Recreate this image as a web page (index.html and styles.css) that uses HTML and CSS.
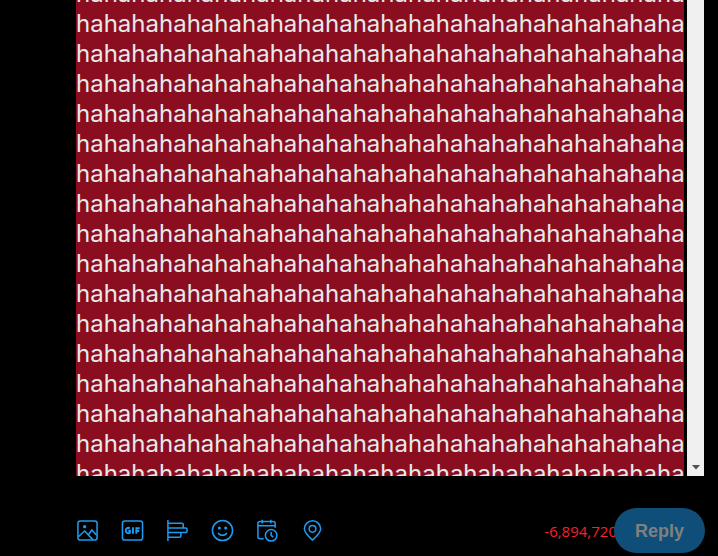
FILE: index.html
```html
<!DOCTYPE html>
<html lang="en">
<head>
<meta charset="utf-8">
<title>Reply</title>
<link rel="stylesheet" href="styles.css">
</head>
<body>
<main class="composer">
  <div class="editor">
    <div class="viewport">
      <div class="text" role="textbox" aria-label="Post your reply" aria-multiline="true" contenteditable="true" spellcheck="false"></div>
    </div>
    <div class="scrollbar" aria-hidden="true"><svg class="arrow" viewBox="0 0 8 5"><path d="M0 0H8L4 4.500Z"/></svg></div>
  </div>
  <footer class="toolbar">
    <div class="tools">
      <button class="tool" type="button" aria-label="Media"><svg viewBox="0 0 24 24"><rect x="2" y="2" width="20" height="20" rx="2.500"/><path d="M2.500 18.500 9 12.500 17.500 21.500M13 16.500 16.500 11.500 21.500 17"/><circle class="solid" cx="9" cy="8" r="1.700"/></svg></button>
      <button class="tool" type="button" aria-label="GIF"><svg viewBox="0 0 24 24"><rect x="1.500" y="2" width="21" height="20" rx="2.500"/><path class="bold" d="M9.200 9.900C7.500 8.300 5 9.600 5 12s2.300 3.700 4.300 2.300V12.300H7.600M12.500 8.600V15.400M16 15.400V9.600H19.500M16 12.500H19"/></svg></button>
      <button class="tool" type="button" aria-label="Poll"><svg viewBox="0 0 24 24"><path d="M2 1V23M2 4.500H16.500Q18 4.500 18 6V9.500M2 9.500H20.500Q22 9.500 22 11V12.500Q22 14 20.500 14H2M15.500 14V17.500Q15.500 19 14 19H2"/></svg></button>
      <button class="tool" type="button" aria-label="Emoji"><svg viewBox="0 0 24 24"><circle cx="12" cy="12" r="10.500"/><path d="M7.500 14.500C9 17.800 15 17.800 16.500 14.500"/><circle class="solid" cx="8.700" cy="9.300" r="1.600"/><circle class="solid" cx="15.300" cy="9.300" r="1.600"/></svg></button>
      <button class="tool" type="button" aria-label="Schedule"><svg viewBox="0 0 24 24"><path d="M8 20.500H4Q2 20.500 2 18.500V4.500Q2 2.500 4 2.500H18Q20 2.500 20 4.500V9M2 7H20M6.500 .8V4.500M15.500 .8V4.500M15.800 13.500V17L18 19"/><circle cx="15.800" cy="17" r="6"/></svg></button>
      <button class="tool" type="button" aria-label="Location"><svg viewBox="0 0 24 24"><path d="M12 22C8.500 19 3.500 14.500 3.500 10.300A8.500 8.500 0 0 1 20.500 10.300C20.500 14.500 15.500 19 12 22Z"/><circle cx="12" cy="10.300" r="3.500"/></svg></button>
    </div>
    <div class="submit">
      <output class="count">-6,894,720</output>
      <button class="reply" type="button" disabled>Reply</button>
    </div>
  </footer>
</main>
<script src="script.js"></script>
</body>
</html>
```
FILE: script.js
```js
const em = document.createElement("em");
em.className = "excess";
em.textContent = "ha".repeat(22 * 17);
document.querySelector(".text").append(em);
```
FILE: styles.css
```css
* { box-sizing: border-box; }
body { margin: 0; background: #000; }
.composer {
  display: flex;
  flex-direction: column;
  height: 100vh;
  padding: 0 14px 0 76px;
}
.editor {
  display: flex;
  flex: 1;
  gap: 3px;
  min-height: 0;
}
.viewport {
  flex: 1;
  overflow: hidden;
  background: #8b0e20;
}
.text {
  margin: -21px -4px 0 0;
  color: #e7e9ea;
  font: 24px/30px Inter, sans-serif;
  word-break: break-all;
  outline: none;
}
.excess { font-style: normal; }
.scrollbar {
  display: flex;
  align-items: flex-end;
  justify-content: center;
  width: 17px;
  padding-bottom: 6px;
  background: #f0f0f0;
}
.arrow { width: 8px; height: 5px; fill: #505050; }
.toolbar {
  display: flex;
  align-items: center;
  justify-content: space-between;
  height: 80px;
  padding-top: 29px;
  margin-right: -1px;
}
.tools { display: flex; gap: 22px; }
.tool {
  width: 23px;
  height: 23px;
  padding: 0;
  border: 0;
  background: none;
}
.tool svg {
  display: block;
  width: 100%;
  height: 100%;
  fill: none;
  stroke: #1d9bf0;
  stroke-width: 1.6;
}
.tool .solid { fill: #1d9bf0; stroke: none; }
.tool .bold { stroke-width: 2; }
.submit { display: flex; align-items: center; }
.count {
  margin-right: -3px;
  color: #f4212e;
  font: 15px/20px "Open Sans", sans-serif;
}
.reply {
  height: 45px;
  padding: 0 21px;
  border: 0;
  border-radius: 23px;
  background: #0f4e78;
  color: #808080;
  font: bold 18px/24px "Liberation Sans", sans-serif;
}
```
